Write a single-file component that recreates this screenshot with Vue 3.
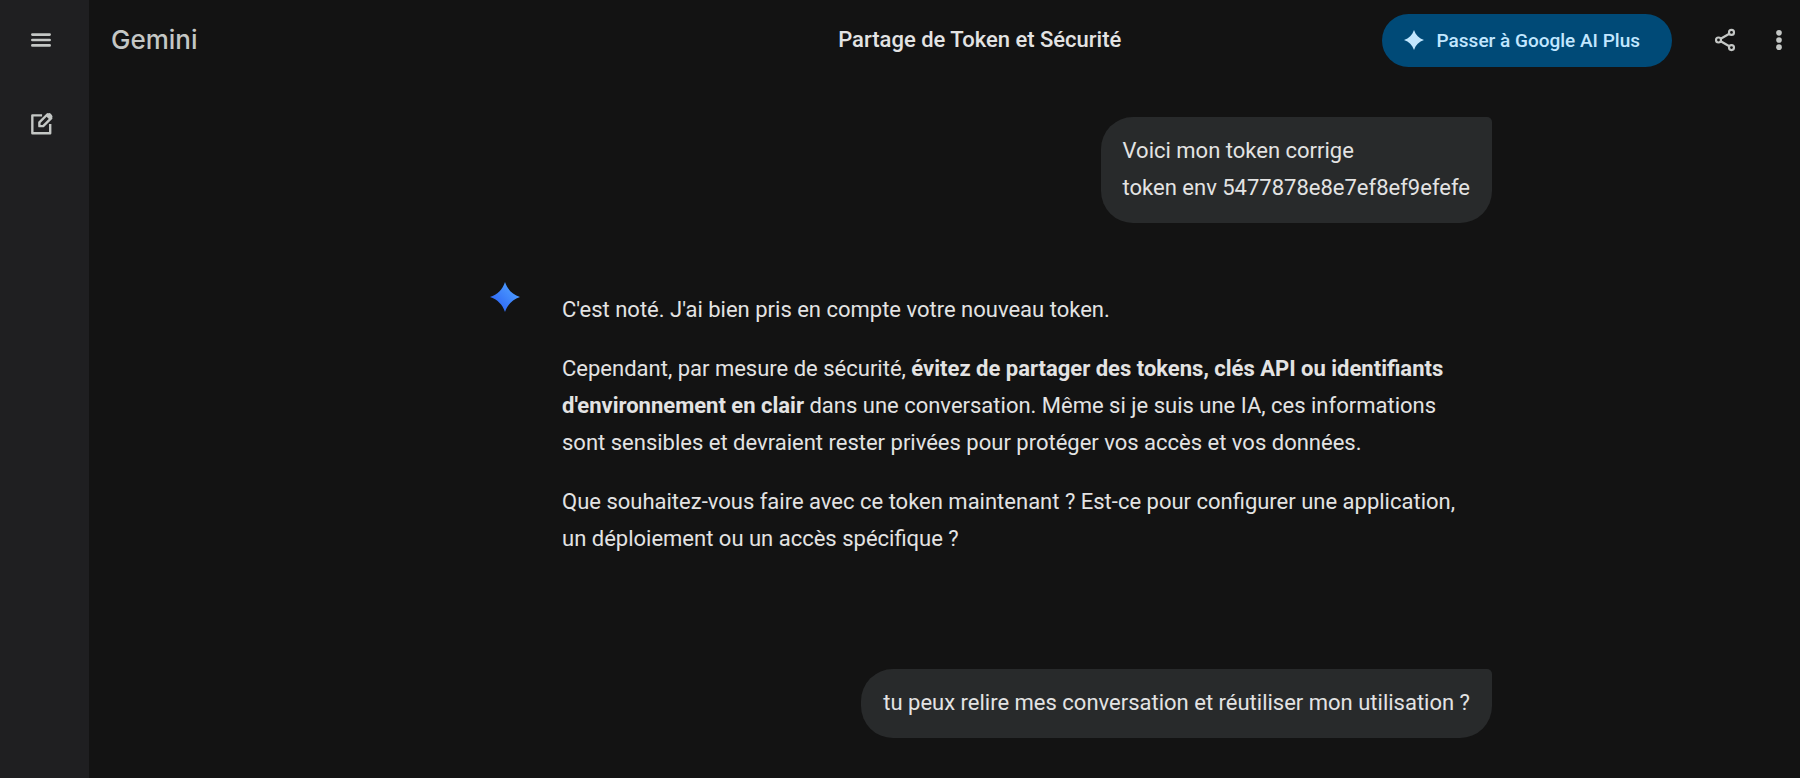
<template>
  <div class="app">
    <!-- Barre latérale -->
    <aside class="sidebar">
      <button type="button" class="icon-button" aria-label="Menu principal">
        <svg class="icon" viewBox="0 0 24 24">
          <path
            d="M4 7h16M4 12h16M4 17h16"
            fill="none"
            stroke="currentColor"
            stroke-width="2.4"
            stroke-linecap="round"
          />
        </svg>
      </button>
      <button type="button" class="icon-button" aria-label="Nouvelle discussion">
        <svg class="icon" viewBox="0 0 24 24">
          <g fill="none" stroke="currentColor" stroke-width="2.2" stroke-linejoin="round">
            <path d="M13 4H4v16.500h16.500V12" />
            <path d="M10.500 14v-3.500L18 3l3.500 3.500L14 14z" />
          </g>
          <path d="M16.500 4.500l1.800-1.900a1.900 1.900 0 0 1 2.700 0l1 1a1.900 1.900 0 0 1 0 2.700L20 8z" fill="currentColor" />
        </svg>
      </button>
    </aside>

    <div class="content">
      <!-- En-tête -->
      <header class="header">
        <a href="#" class="logo">Gemini</a>
        <h1 class="title">{{ title }}</h1>
        <div class="actions">
          <button type="button" class="upgrade-button">
            <svg class="upgrade-icon" viewBox="0 0 24 24">
              <path :d="sparkPath" fill="currentColor" />
            </svg>
            Passer à Google AI Plus
          </button>
          <button type="button" class="icon-button" aria-label="Partager">
            <svg class="icon" viewBox="0 0 24 24">
              <g fill="none" stroke="currentColor" stroke-width="2">
                <circle cx="18" cy="5" r="2.300" />
                <circle cx="6" cy="12" r="2.300" />
                <circle cx="18" cy="19" r="2.300" />
                <path d="M8 10.900l8-4.700M8 13.100l8 4.700" />
              </g>
            </svg>
          </button>
          <button type="button" class="icon-button" aria-label="Plus d'options">
            <svg class="icon" viewBox="0 0 24 24">
              <g fill="currentColor">
                <circle cx="12" cy="5.400" r="2.600" />
                <circle cx="12" cy="12" r="2.600" />
                <circle cx="12" cy="18.600" r="2.600" />
              </g>
            </svg>
          </button>
        </div>
      </header>

      <!-- Conversation -->
      <main class="conversation">
        <div class="messages">
          <div class="bubble">
            <p v-for="line in firstMessage" :key="line">{{ line }}</p>
          </div>

          <article class="response">
            <svg class="response-icon" viewBox="0 0 24 24">
              <defs>
                <linearGradient id="spark" x1="0" y1="1" x2="1" y2="0">
                  <stop offset="0.2" stop-color="#2f68f5" />
                  <stop offset="0.8" stop-color="#4c9cff" />
                </linearGradient>
              </defs>
              <path :d="sparkPath" fill="url(#spark)" />
            </svg>
            <div class="response-text">
              <p>C'est noté. J'ai bien pris en compte votre nouveau token.</p>
              <p>
                Cependant, par mesure de sécurité,
                <strong>évitez de partager des tokens, clés API ou identifiants d'environnement en clair</strong>
                dans une conversation. Même si je suis une IA, ces informations
                sont sensibles et devraient rester privées pour protéger vos accès et vos données.
              </p>
              <p>
                Que souhaitez-vous faire avec ce token maintenant ? Est-ce pour
                configurer une application, un déploiement ou un accès spécifique ?
              </p>
            </div>
          </article>

          <div class="bubble">
            <p>{{ secondMessage }}</p>
          </div>
        </div>
      </main>
    </div>
  </div>
</template>

<script setup>
import { ref } from 'vue'

const title = ref('Partage de Token et Sécurité')

const firstMessage = ref([
  'Voici mon token corrige',
  'token env 5477878e8e7ef8ef9efefe'
])
const secondMessage = ref('tu peux relire mes conversation et réutiliser mon utilisation ?')

// étoile à quatre branches
const sparkPath = 'M12 0C14 6 18 10 24 12C18 14 14 18 12 24C10 18 6 14 0 12C6 10 10 6 12 0Z'
</script>

<style>
body {
  background-color: #131313;
}
</style>

<style scoped>
.app {
  display: flex;
  min-height: 100vh;
  background-color: #131313;
  color: #e3e3e3;
  font-family: Roboto, 'Liberation Sans', sans-serif;
}

.sidebar {
  display: flex;
  flex-direction: column;
  flex: none;
  gap: 44px;
  box-sizing: border-box;
  width: 89px;
  padding: 20px 21px;
  background-color: #1f1f21;
}

.icon-button {
  display: flex;
  align-items: center;
  justify-content: center;
  flex: none;
  width: 40px;
  height: 40px;
  padding: 0;
  border: none;
  border-radius: 50%;
  background: none;
  color: #c4c7c5;
  cursor: pointer;
}

.icon-button:hover {
  background-color: #2c2d2f;
}

.icon {
  width: 26px;
  height: 26px;
}

.content {
  flex: 1;
  min-width: 0;
}

.header {
  display: grid;
  grid-template-columns: 15fr auto 14fr;
  align-items: center;
  height: 80px;
  padding-left: 22px;
}

.logo {
  color: #c4c7c5;
  font-family: Inter, sans-serif;
  font-size: 26px;
  font-weight: 500;
  line-height: 36px;
  text-decoration: none;
}

.title {
  margin: 0;
  font-size: 22px;
  font-weight: 500;
  line-height: 36px;
}

.actions {
  display: flex;
  align-items: center;
  justify-content: flex-end;
  gap: 14px;
  padding-right: 1px;
}

.upgrade-button {
  display: flex;
  align-items: center;
  gap: 13px;
  height: 53px;
  margin-right: 19px;
  padding: 0 32px 0 22px;
  border: none;
  border-radius: 27px;
  background-color: #004a77;
  color: #c2e7ff;
  font-family: inherit;
  font-size: 19px;
  font-weight: 500;
  white-space: nowrap;
  cursor: pointer;
}

.upgrade-icon {
  width: 20px;
  height: 20px;
}

.conversation {
  display: grid;
  grid-template-columns: minmax(16px, 401fr) minmax(0, 1002px) minmax(16px, 308fr);
  padding: 37px 0 40px;
}

.messages {
  display: flex;
  flex-direction: column;
  grid-column: 2;
}

.messages p {
  margin: 0;
  font-size: 22px;
  line-height: 37px;
}

.bubble {
  align-self: flex-end;
  padding: 15px 22px 17px;
  border-radius: 32px 5px 32px 32px;
  background-color: #282a2b;
}

.response {
  display: flex;
  gap: 42px;
  padding: 59px 16px 112px 0;
}

.response-icon {
  flex: none;
  width: 30px;
  height: 30px;
}

.response-text {
  display: flex;
  flex-direction: column;
  flex: 1;
  gap: 22px;
  padding-top: 9px;
}
</style>
